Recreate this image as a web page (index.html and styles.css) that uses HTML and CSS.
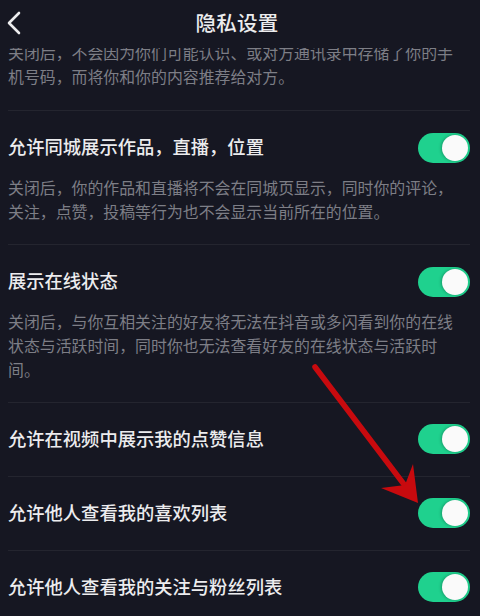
FILE: index.html
```html
<!DOCTYPE html>
<html lang="zh-CN">
<head>
    <meta charset="UTF-8">
    <title>隐私设置</title>
    <link rel="stylesheet" href="styles.css">
</head>
<body>
    <div class="page">
        <div class="nav-bar">
            <span class="nav-back">
                <svg width="16" height="24" viewBox="0 0 16 24">
                    <path d="M13 2 L3 12 L13 22" fill="none" stroke="#ececee" stroke-width="2.6" stroke-linecap="round" stroke-linejoin="round"/>
                </svg>
            </span>
            <div class="nav-title">隐私设置</div>
        </div>
        <div class="list">
            <div class="list-inner">
                <div class="section section-cut">
                    <p class="desc">关闭后，不会因为你们可能认识、或对方通讯录中存储了你的手机号码，而将你和你的内容推荐给对方。</p>
                </div>
                <div class="section">
                    <div class="item-head">
                        <span class="item-title">允许同城展示作品，直播，位置</span>
                        <span class="switch on"></span>
                    </div>
                    <p class="desc">关闭后，你的作品和直播将不会在同城页显示，同时你的评论，关注，点赞，投稿等行为也不会显示当前所在的位置。</p>
                </div>
                <div class="section">
                    <div class="item-head">
                        <span class="item-title">展示在线状态</span>
                        <span class="switch on"></span>
                    </div>
                    <p class="desc">关闭后，与你互相关注的好友将无法在抖音或多闪看到你的在线状态与活跃时间，同时你也无法查看好友的在线状态与活跃时间。</p>
                </div>
                <div class="row">
                    <span class="item-title">允许在视频中展示我的点赞信息</span>
                    <span class="switch on"></span>
                </div>
                <div class="row">
                    <span class="item-title">允许他人查看我的喜欢列表</span>
                    <span class="switch on"></span>
                </div>
                <div class="row">
                    <span class="item-title">允许他人查看我的关注与粉丝列表</span>
                    <span class="switch on"></span>
                </div>
            </div>
            <!-- red pointer drawn on top of the list -->
            <svg class="pointer" width="480" height="568" viewBox="0 48 480 568">
                <line x1="315" y1="367" x2="406" y2="487" stroke="#c80a0e" stroke-width="5.5" stroke-linecap="round"/>
                <polygon points="418,503 381,488 405,485 413,464" fill="#c80a0e"/>
            </svg>
        </div>
    </div>
</body>
</html>
```

FILE: styles.css
```css
* {
    box-sizing: border-box;
}
body {
    margin: 0;
    background: #161722;
    font-family: "Noto Sans CJK SC", "Noto Sans", sans-serif;
    color: #ececee;
}
.page {
    width: 480px;
    height: 616px;
    display: flex;
    flex-direction: column;
    overflow: hidden;
}
.nav-bar {
    height: 48px;
    flex-shrink: 0;
    display: flex;
    align-items: center;
    position: relative;
    z-index: 2;
    background: #161722;
}
.nav-back {
    width: 40px;
    padding-left: 6px;
    display: flex;
    align-items: center;
    margin-top: -2px;
}
.nav-title {
    flex: 1;
    text-align: center;
    margin-right: 46px;
    margin-top: -4px;
    font-size: 20.5px;
    font-weight: 500;
    letter-spacing: 0.3px;
}
.list {
    flex: 1;
    position: relative;
    overflow: hidden;
}
.list-inner {
    padding: 0 10px 0 8px;
}
.section {
    padding: 23px 0 20px;
    border-bottom: 1px solid #24252f;
}
.section-cut {
    margin-top: -7px;
    padding: 0 0 21px;
}
.item-head {
    display: flex;
    align-items: center;
    justify-content: space-between;
    height: 24px;
}
.item-title {
    font-size: 18.3px;
    line-height: 24px;
    font-weight: 500;
}
.desc {
    margin: 18px 10px 0 0;
    font-size: 15.9px;
    line-height: 24px;
    color: #7d7e86;
    line-break: strict;
}
.section-cut .desc {
    margin-top: 0;
}
.row {
    height: 74px;
    display: flex;
    align-items: center;
    justify-content: space-between;
    border-bottom: 1px solid #24252f;
    padding-bottom: 4px;
}
.switch {
    width: 52px;
    height: 30px;
    border-radius: 15px;
    background: #3a3b46;
    position: relative;
    flex-shrink: 0;
    margin-top: 3px;
}
.switch.on {
    background: #1fd18e;
}
.switch::after {
    content: "";
    position: absolute;
    top: 2px;
    left: 2px;
    width: 26px;
    height: 26px;
    border-radius: 50%;
    background: #fafafa;
    box-shadow: -1px 0 3px rgba(0, 0, 0, 0.25);
}
.switch.on::after {
    left: 24px;
}
.pointer {
    position: absolute;
    left: 0;
    top: 0;
    pointer-events: none;
}
```
